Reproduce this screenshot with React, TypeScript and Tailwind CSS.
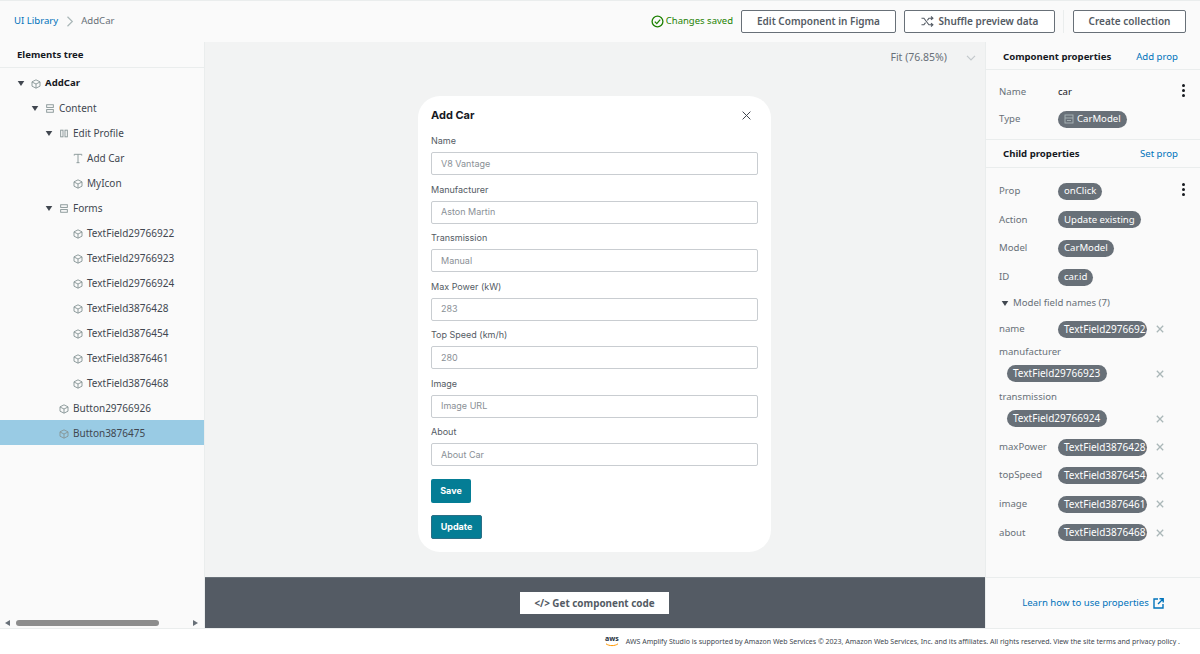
import React from "react";

const Cube = () => (
  <svg width="10" height="10" viewBox="0 0 12 12" fill="none" stroke="#879596" strokeWidth="1.1" className="shrink-0">
    <path d="M6 1 10.8 3.4V8.6L6 11 1.2 8.6V3.4Z" />
    <path d="M1.2 3.6 6 6 10.8 3.6M6 6V11" />
  </svg>
);
const Rows = () => (
  <svg width="10" height="11" viewBox="0 0 12 12" fill="none" stroke="#879596" strokeWidth="1.1" className="shrink-0">
    <rect x="2" y="1.5" width="8" height="3.2" />
    <rect x="2" y="7.300" width="8" height="3.2" />
  </svg>
);
const Cols = () => (
  <svg width="10" height="11" viewBox="0 0 12 12" fill="none" stroke="#879596" strokeWidth="1.1" className="shrink-0">
    <rect x="2" y="2" width="2.800" height="8" />
    <rect x="7.200" y="2" width="2.800" height="8" />
  </svg>
);
const TextIcon = () => (
  <svg width="10" height="11" viewBox="0 0 12 12" fill="none" stroke="#879596" strokeWidth="1.1">
    <path d="M1.500 2.500V1h9v1.500M6 1v10M4.200 11h3.600" />
  </svg>
);
const Caret = () => (
  <svg width="8" height="7" viewBox="0 0 9 7" className="shrink-0"><path d="M.8.8h7.400L4.500 6.400Z" fill="#414750" /></svg>
);

type Row = { label: string; depth: number; icon: React.ReactNode; caret?: boolean; bold?: boolean; selected?: boolean };
const tree: Row[] = [
  { label: "AddCar", depth: 0, icon: <Cube />, caret: true, bold: true },
  { label: "Content", depth: 1, icon: <Rows />, caret: true },
  { label: "Edit Profile", depth: 2, icon: <Cols />, caret: true },
  { label: "Add Car", depth: 3, icon: <TextIcon /> },
  { label: "MyIcon", depth: 3, icon: <Cube /> },
  { label: "Forms", depth: 2, icon: <Rows />, caret: true },
  { label: "TextField29766922", depth: 3, icon: <Cube /> },
  { label: "TextField29766923", depth: 3, icon: <Cube /> },
  { label: "TextField29766924", depth: 3, icon: <Cube /> },
  { label: "TextField3876428", depth: 3, icon: <Cube /> },
  { label: "TextField3876454", depth: 3, icon: <Cube /> },
  { label: "TextField3876461", depth: 3, icon: <Cube /> },
  { label: "TextField3876468", depth: 3, icon: <Cube /> },
  { label: "Button29766926", depth: 2, icon: <Cube /> },
  { label: "Button3876475", depth: 2, icon: <Cube />, selected: true },
];

const depthPad: Record<number, string> = { 0: "pl-[17px]", 1: "pl-[31px]", 2: "pl-[45px]", 3: "pl-[59px]" };

const TreeRow = ({ r }: { r: Row }) => (
  <div className={`flex h-[25px] items-center pt-[2px] ${depthPad[r.depth]} ${r.selected ? "bg-[#99cbe4]" : ""}`}>
    <span className="flex w-[13px] shrink-0 items-center">{r.caret && <Caret />}</span>
    <span className="mr-[4px] flex w-[11px] items-center justify-center">{r.icon}</span>
    <span className={`whitespace-nowrap ${r.bold ? "text-[9.6px] font-bold text-[#16191f]" : "text-[10px] text-[#414750]"}`}>{r.label}</span>
  </div>
);

const Field = ({ label, placeholder }: { label: string; placeholder: string }) => (
  <div className="mb-[8.5px] flex flex-col">
    <div className="h-[17px] text-[9px] leading-[12px] text-[#545b64]">{label}</div>
    <div className="flex h-[23px] items-center rounded-[2px] border border-[#c9cdd1] bg-white pl-[9px] text-[9px] text-[#8a9096]">
      {placeholder}
    </div>
  </div>
);

const Pill = ({ children, narrow, wide }: { children: React.ReactNode; narrow?: boolean; wide?: boolean }) => (
  <span className={`inline-flex h-[17px] items-center overflow-hidden whitespace-nowrap rounded-full bg-[#687078] pl-[6px] ${narrow ? "w-[89px] text-[10px]" : wide ? "w-[100px] text-[10px]" : "pr-[6px] text-[9.6px]"} text-white`}>
    {children}
  </span>
);

const X = () => (
  <svg width="8" height="8" viewBox="0 0 8 8" stroke="#aab7b8" strokeWidth="1.3" className="shrink-0"><path d="M.8.8l6.400 6.400M7.200.8.8 7.200" /></svg>
);
const Dots = () => (
  <span className="-mt-[3px] flex h-[13px] w-[3px] flex-col justify-between">
    <i className="h-[3px] w-[3px] rounded-full bg-[#16191f]" />
    <i className="h-[3px] w-[3px] rounded-full bg-[#16191f]" />
    <i className="h-[3px] w-[3px] rounded-full bg-[#16191f]" />
  </span>
);

const PropRow = ({ name, h, children, dots }: { name: string; h: string; children: React.ReactNode; dots?: boolean }) => (
  <div className={`flex items-center pl-[13px] pr-[15px] ${h}`}>
    <span className="w-[59px] shrink-0 text-[9.6px] text-[#687078]">{name}</span>
    <span className="flex flex-1 items-center">{children}</span>
    {dots && <Dots />}
  </div>
);

const FieldRow = ({ name, value, h }: { name: string; value: string; h: string }) => (
  <div className={`flex items-center pl-[13px] ${h}`}>
    <span className="w-[59px] shrink-0 text-[9.6px] text-[#687078]">{name}</span>
    <Pill narrow>{value}</Pill>
    <span className="ml-[9px] flex"><X /></span>
  </div>
);

const StackedFieldRow = ({ name, value }: { name: string; value: string }) => (
  <div className="flex h-[44.7px] flex-col pl-[13px]">
    <span className="h-[18px] text-[9.6px] leading-[18px] text-[#687078]">{name}</span>
    <div className="mt-[4px] flex items-center pl-[8px]">
      <Pill wide>{value}</Pill>
      <span className="ml-[49px] flex"><X /></span>
    </div>
  </div>
);

const HeaderBtn = ({ children, w }: { children: React.ReactNode; w: string }) => (
  <div className={`flex h-[23px] items-center justify-center gap-[5px] rounded-[2px] border border-[#687078] bg-white text-[10px] font-semibold text-[#545b64] ${w}`}>
    {children}
  </div>
);

export default function App() {
  return (
    <div className="flex h-[654px] w-[1200px] flex-col overflow-hidden bg-white font-['Noto_Sans',sans-serif]">
      <header className="flex h-[42px] shrink-0 items-center border-t border-[#eaeded] bg-[#fafafa] pl-[14px] pr-[14px]">
        <span className="text-[9.6px] text-[#0073bb]">UI Library</span>
        <svg width="8" height="11" viewBox="0 0 8 11" fill="none" stroke="#aab7b8" strokeWidth="1.2" className="ml-[8px] mr-[7px]"><path d="M1.500.8 6.300 5.500 1.500 10.200" /></svg>
        <span className="text-[9.6px] text-[#687078]">AddCar</span>
        <div className="flex-1" />
        <svg width="13" height="13" viewBox="0 0 13 13" fill="none" stroke="#1d8102" strokeWidth="1.3">
          <circle cx="6.500" cy="6.500" r="5.400" /><path d="M3.800 6.600 5.800 8.600 9.200 4.600" />
        </svg>
        <span className="ml-[2px] mr-[8px] text-[9.5px] text-[#1d8102]">Changes saved</span>
        <HeaderBtn w="w-[155px]">Edit Component in Figma</HeaderBtn>
        <span className="w-[8px]" />
        <HeaderBtn w="w-[151px]">
          <svg width="13" height="11" viewBox="0 0 13 11" fill="none" stroke="#545b64" strokeWidth="1.1">
            <path d="M.5 2.200h2.400l5 6.600h3.600M.5 8.800h2.400l1.600-2.200M6.400 4.400l1.500-2.200h3.600M10 .5l1.900 1.700L10 3.900M10 7.100l1.900 1.700L10 10.500" />
          </svg>
          Shuffle preview data
        </HeaderBtn>
        <span className="ml-[8px] mr-[9px] h-[23px] w-px bg-[#eaeded]" />
        <HeaderBtn w="w-[113px]">Create collection</HeaderBtn>
      </header>

      <div className="flex min-h-0 flex-1">
        <aside className="flex w-[205px] shrink-0 flex-col border-r border-[#eaeded] bg-[#fafafa]">
          <div className="flex h-[26px] shrink-0 items-center border-b border-[#eaeded] pl-[17px] pt-[2px] text-[9.6px] font-bold text-[#16191f]">Elements tree</div>
          <div className="flex-1 pt-[2px]">
            {tree.map((r) => <TreeRow key={r.label} r={r} />)}
          </div>
          <div className="flex h-[10px] shrink-0 items-center pl-[5px] pr-[6px]">
            <svg width="5" height="6" viewBox="0 0 5 6"><path d="M5 0v6L0 3Z" fill="#687078" /></svg>
            <span className="ml-[6px] h-[6px] w-[143px] rounded-full bg-[#8d8d8d]" />
            <span className="flex-1" />
            <svg width="5" height="6" viewBox="0 0 5 6"><path d="M0 0v6l5-3Z" fill="#687078" /></svg>
          </div>
        </aside>

        <main className="flex min-w-0 flex-1 flex-col bg-[#f2f3f3]">
          <div className="flex h-[30px] shrink-0 items-center justify-end pr-[9px] pt-[1px] text-[10.5px] text-[#687078]">
            <span>Fit (76.85%)</span>
            <svg width="10" height="6" viewBox="0 0 10 6" fill="none" stroke="#c3c9cc" strokeWidth="1.2" className="ml-[19px]"><path d="M1 .8 5 5 9 .8" /></svg>
          </div>
          <div className="flex flex-1 justify-center pr-[1px] pt-[24px]">
            <div className="h-[456px] w-[353px] rounded-[22px] bg-white px-[13px] pt-[10px] font-['Inter',sans-serif]">
              <div className="mb-[10px] flex h-[19px] items-center justify-between pr-[7px]">
                <span className="text-[11px] font-bold text-[#16191f]">Add Car</span>
                <svg width="9" height="9" viewBox="0 0 9 9" stroke="#414750" strokeWidth="1"><path d="M.6.6l7.800 7.800M8.400.6.6 8.400" /></svg>
              </div>
              <Field label="Name" placeholder="V8 Vantage" />
              <Field label="Manufacturer" placeholder="Aston Martin" />
              <Field label="Transmission" placeholder="Manual" />
              <Field label="Max Power (kW)" placeholder="283" />
              <Field label="Top Speed (km/h)" placeholder="280" />
              <Field label="Image" placeholder="Image URL" />
              <Field label="About" placeholder="About Car" />
              <div className="mt-[13px] flex h-[24px] w-[40px] items-center justify-center rounded-[2px] bg-[#047d95] text-[9px] font-bold text-white">Save</div>
              <div className="mt-[12px] flex h-[24px] w-[51px] items-center justify-center rounded-[2px] border border-[#2a6f86] bg-[#047d95] text-[9px] font-bold text-white">Update</div>
            </div>
          </div>
          <div className="flex h-[51px] shrink-0 items-center justify-center border-t border-[#687078] bg-[#545b64] pr-[1px]">
            <div className="flex h-[22px] w-[149px] items-center justify-center bg-white text-[9.9px] font-bold text-[#545b64]">&lt;/&gt; Get component code</div>
          </div>
        </main>

        <aside className="flex w-[215px] shrink-0 flex-col border-l border-[#eaeded] bg-[#fafafa]">
          <div className="flex h-[28px] shrink-0 items-center justify-between border-b border-[#eaeded] pl-[17px] pr-[22px] pt-[3px] text-[9.6px]">
            <span className="font-bold text-[#16191f]">Component properties</span>
            <span className="text-[#0073bb]">Add prop</span>
          </div>
          <div className="flex h-[70px] shrink-0 flex-col border-b border-[#eaeded] pt-[9px]">
            <PropRow name="Name" h="h-[26px]" dots><span className="text-[9.6px] text-[#16191f]">car</span></PropRow>
            <PropRow name="Type" h="h-[28px]">
              <Pill>
                <svg width="10" height="10" viewBox="0 0 10 10" fill="none" stroke="#aab7b8" strokeWidth=".9" className="mr-[3px]"><rect x="1" y="1" width="8" height="8" /><path d="M1 4h8M3 6.500h4" /></svg>
                CarModel
              </Pill>
            </PropRow>
          </div>
          <div className="flex h-[28px] shrink-0 items-center justify-between border-b border-[#eaeded] pl-[17px] pr-[22px] pt-[2px] text-[9.6px]">
            <span className="font-bold text-[#16191f]">Child properties</span>
            <span className="text-[#0073bb]">Set prop</span>
          </div>
          <div className="flex-1 pt-[9px]">
            <PropRow name="Prop" h="h-[28.6px]" dots><Pill>onClick</Pill></PropRow>
            <PropRow name="Action" h="h-[28.6px]"><Pill>Update existing</Pill></PropRow>
            <PropRow name="Model" h="h-[28.6px]"><Pill>CarModel</Pill></PropRow>
            <PropRow name="ID" h="h-[28.6px]"><Pill>car.id</Pill></PropRow>
            <div className="flex h-[24px] items-center gap-[4px] pl-[15px] text-[9.6px] text-[#687078]"><Caret />Model field names (7)</div>
            <FieldRow name="name" value="TextField29766922" h="h-[28px]" />
            <StackedFieldRow name="manufacturer" value="TextField29766923" />
            <StackedFieldRow name="transmission" value="TextField29766924" />
            <FieldRow name="maxPower" value="TextField3876428" h="h-[28.6px]" />
            <FieldRow name="topSpeed" value="TextField3876454" h="h-[28.6px]" />
            <FieldRow name="image" value="TextField3876461" h="h-[28.6px]" />
            <FieldRow name="about" value="TextField3876468" h="h-[28.6px]" />
          </div>
          <div className="flex h-[51px] shrink-0 items-center justify-center gap-[4px] border-t border-[#eaeded] pt-[1px] text-[9.6px] text-[#0073bb]">
            Learn how to use properties
            <svg width="11" height="11" viewBox="0 0 11 11" fill="none" stroke="#0073bb" strokeWidth="1.4"><path d="M5 1H1v9h9V6M6.500.8h3.700v3.700M10 1 5 6" /></svg>
          </div>
        </aside>
      </div>

      <footer className="flex h-[26px] shrink-0 items-center justify-end border-t border-[#eaeded] bg-white pr-[20px] pt-[1px] text-[7px] text-[#414750]">
        <span className="relative mr-[7px] flex h-[14px] w-[14px] flex-col items-center leading-[8px]">
          <span className="text-[7px] font-bold text-[#232f3e]">aws</span>
          <svg width="14" height="4" viewBox="0 0 14 4" fill="none" stroke="#ff9900" strokeWidth="1"><path d="M1 .8C4 3.200 10 3.200 13 .8" /></svg>
        </span>
        AWS Amplify Studio is supported by Amazon Web Services © 2023, Amazon Web Services, Inc. and its affiliates. All rights reserved. View the site terms and privacy policy .
      </footer>
    </div>
  );
}
